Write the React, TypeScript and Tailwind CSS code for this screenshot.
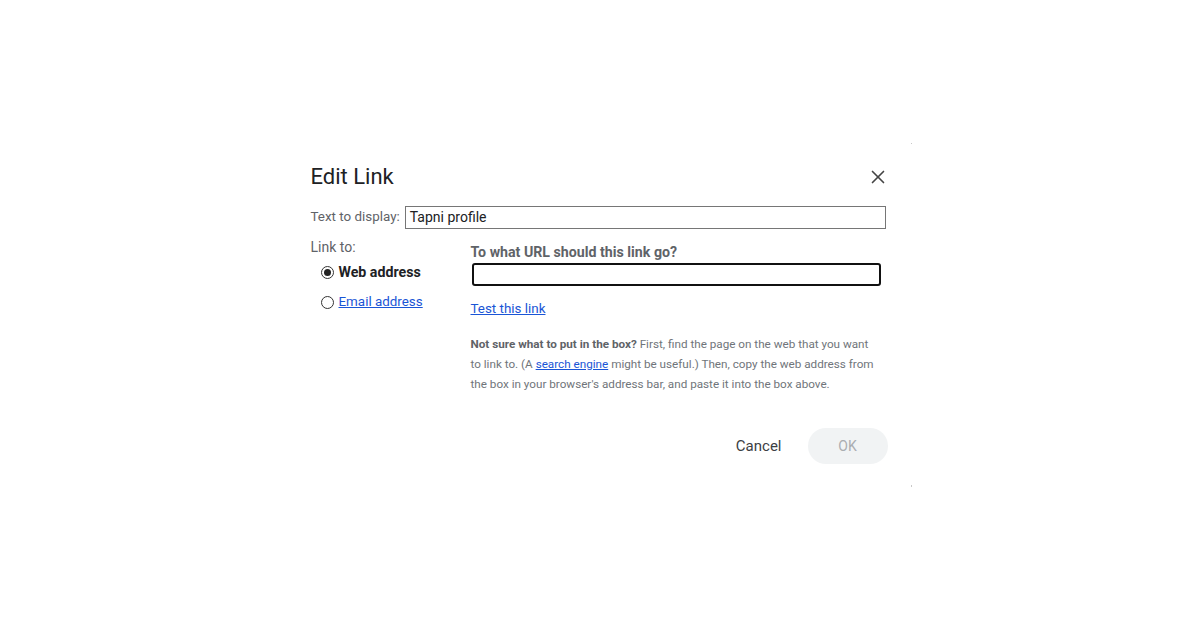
import { X } from 'lucide-react';

const font = { fontFamily: 'Roboto, "Noto Sans", sans-serif' };

function Radio({ checked }: { checked?: boolean }) {
  return (
    <span className="flex h-[13px] w-[13px] items-center justify-center rounded-full border border-[#333] bg-white">
      {checked && <span className="h-[7px] w-[7px] rounded-full bg-[#222]" />}
    </span>
  );
}

export default function App() {
  return (
    <div className="flex h-[630px] w-[1200px] items-center justify-center bg-white" style={font}>
      <div className="relative flex h-[344px] w-[625px] flex-col pl-6 pr-[27px] pt-[20px]">
        <span className="absolute right-[1px] top-0 h-px w-px bg-[#c8c8c8]" />
        <span className="absolute bottom-0 right-[1px] h-[2px] w-px bg-[#c8c8c8]" />

        <div className="flex items-center justify-between">
          <h1 className="ml-[-1px] text-[22px] leading-[28px] text-[#202124]">Edit Link</h1>
          <X size={22} strokeWidth={1.8} className="mr-[-3px] text-[#444]" />
        </div>

        <div className="mt-[15px] flex items-center">
          <span className="ml-[-1px] text-[13.4px] text-[#5f6368]">Text to display:</span>
          <div className="ml-[5px] flex h-[23px] flex-1 items-center border border-[#767676] px-[4px] text-[14px] text-[#202124]">
            Tapni profile
          </div>
        </div>

        <div className="mt-[9px] flex">
          <div className="w-[160px]">
            <div className="ml-[-1px] mt-[-1px] text-[14px] leading-[20px] text-[#5f6368]">Link to:</div>
            <div className="ml-[9px] mt-[5px] flex items-center gap-[5px]">
              <Radio checked />
              <span className="text-[14.2px] font-bold text-[#202124]">Web address</span>
            </div>
            <div className="ml-[9px] mt-[9px] flex items-center gap-[5px]">
              <Radio />
              <span className="text-[13.4px] text-[#1a55d6] underline">Email address</span>
            </div>
          </div>

          <div className="flex-1 pr-[5px] pt-[5px]">
            <div className="ml-[-1px] text-[14.2px] font-bold leading-[18px] text-[#5f6368]">To what URL should this link go?</div>
            <div className="mt-[2px] h-[23px] rounded-[3px] border-2 border-[#111]" />
            <div className="ml-[-1px] mt-[13px] text-[13.4px] text-[#1a55d6] underline">Test this link</div>
            <p className="ml-[-1px] mt-[15px] whitespace-nowrap text-[11.7px] leading-[20px] text-[#70757a]">
              <span className="font-bold text-[#5f6368]">Not sure what to put in the box?</span> First, find the page on the web that you want
              <br />
              to link to. (A <span className="text-[#1a55d6] underline">search engine</span> might be useful.) Then, copy the web address from
              <br />
              the box in your browser's address bar, and paste it into the box above.
            </p>
          </div>
        </div>

        <div className="mb-[23px] mr-[-2px] mt-auto flex items-center justify-end">
          <span className="mr-[26px] text-[15px] text-[#3c4043]">Cancel</span>
          <div className="flex h-[36px] w-[80px] items-center justify-center rounded-full bg-[#f1f3f4] text-[14px] text-[#aaadb1]">
            OK
          </div>
        </div>
      </div>
    </div>
  );
}
